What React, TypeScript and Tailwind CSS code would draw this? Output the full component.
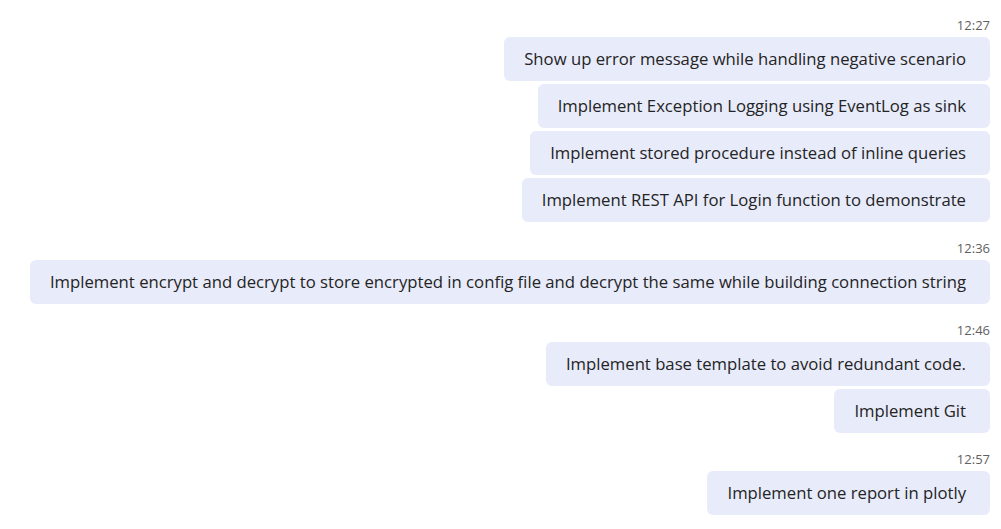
import React from 'react'

type Group = {
  time: string
  messages: string[]
}

const groups: Group[] = [
  {
    time: '12:27',
    messages: [
      'Show up error message while handling negative scenario',
      'Implement Exception Logging using EventLog as sink',
      'Implement stored procedure instead of inline queries',
      'Implement REST API for Login function to demonstrate',
    ],
  },
  {
    time: '12:36',
    messages: [
      'Implement encrypt and decrypt to store encrypted in config file and decrypt the same while building connection string',
    ],
  },
  {
    time: '12:46',
    messages: ['Implement base template to avoid redundant code.', 'Implement Git'],
  },
  {
    time: '12:57',
    messages: ['Implement one report in plotly'],
  },
]

const App: React.FC = () => {
  return (
    <div className="min-h-screen bg-white pt-[17px] pr-[11px] font-['Open_Sans',sans-serif] text-[#242424]">
      <div className="flex flex-col gap-[18px]">
        {groups.map((group) => (
          <div key={group.time} className="flex flex-col items-end">
            <div className="mb-1 text-[13px] leading-4 text-[#616161]">{group.time}</div>
            <div className="flex flex-col items-end gap-[3px]">
              {group.messages.map((msg) => (
                <div
                  key={msg}
                  className="rounded-[6px] bg-[#e8ebfa] py-[10px] pl-5 pr-6 text-[16.7px] leading-6 whitespace-nowrap"
                >
                  {msg}
                </div>
              ))}
            </div>
          </div>
        ))}
      </div>
    </div>
  )
}

export default App
